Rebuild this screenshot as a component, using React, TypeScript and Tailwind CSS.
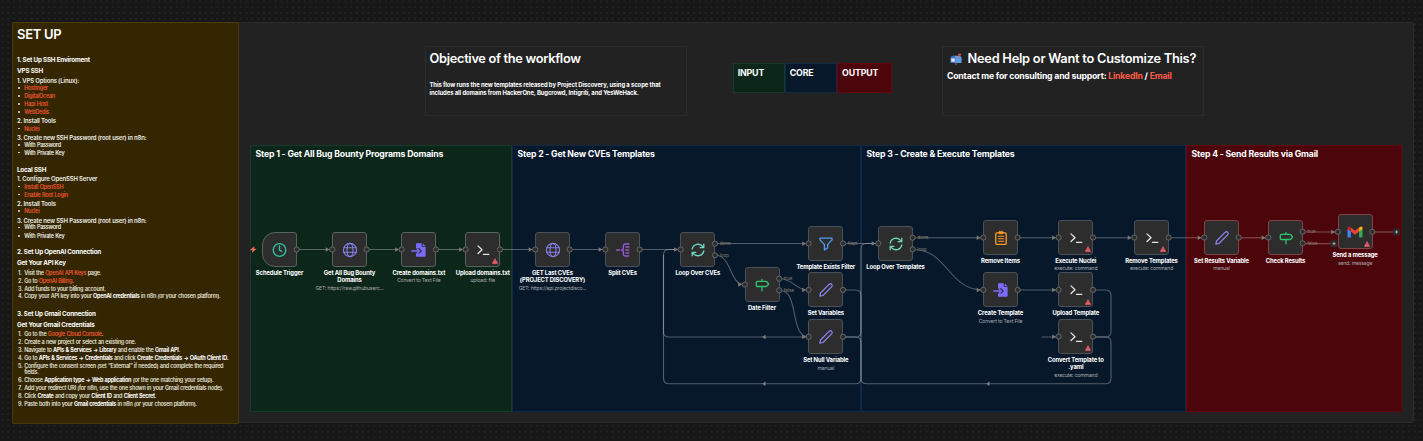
import React from "react";
import clsx from "clsx";

type IconName =
  | "clock"
  | "globe"
  | "file"
  | "terminal"
  | "split"
  | "loop"
  | "sign"
  | "filter"
  | "pencil"
  | "clipboard"
  | "gmail";

type FlowNode = {
  x: number;
  y: number;
  icon: IconName;
  title: string[];
  subtitle?: string;
  outputs?: string[];
  trigger?: boolean;
  warning?: boolean;
  border?: string;
};

type SetupRow = {
  h: number;
  kind: "heading" | "step" | "bullet" | "item";
  num?: string;
  text: React.ReactNode;
};

const NODE = 35;

const GREEN = "border-[#56645b]";
const BLUE = "border-[#4a5058]";
const RED = "border-[#7d4548]";

const nodes: FlowNode[] = [
  { x: 262, y: 232, icon: "clock", title: ["Schedule Trigger"], trigger: true, border: GREEN },
  { x: 332, y: 232, icon: "globe", title: ["Get All Bug Bounty", "Domains"], subtitle: "GET: https://raw.githubuserc...", border: GREEN },
  { x: 401.3, y: 232, icon: "file", title: ["Create domains.txt"], subtitle: "Convert to Text File", border: GREEN },
  { x: 465.3, y: 232, icon: "terminal", title: ["Upload domains.txt"], subtitle: "upload: file", warning: true, border: GREEN },
  { x: 535, y: 232, icon: "globe", title: ["GET Last CVEs", "(PROJECT DISCOVERY)"], subtitle: "GET: https://api.projectdisco..." },
  { x: 605, y: 232, icon: "split", title: ["Split CVEs"] },
  { x: 680.3, y: 232, icon: "loop", title: ["Loop Over CVEs"], outputs: ["done", "loop"] },
  { x: 744.5, y: 267, icon: "sign", title: ["Date Filter"], outputs: ["true", "false"] },
  { x: 808.3, y: 226, icon: "filter", title: ["Template Exists Filter"], outputs: ["Kept"] },
  { x: 808.3, y: 272.4, icon: "pencil", title: ["Set Variables"] },
  { x: 808.3, y: 319.3, icon: "pencil", title: ["Set Null Variable"], subtitle: "manual" },
  { x: 878, y: 226, icon: "loop", title: ["Loop Over Templates"], outputs: ["done", "loop"] },
  { x: 983, y: 220, icon: "clipboard", title: ["Remove Items"] },
  { x: 983, y: 272.4, icon: "file", title: ["Create Template"], subtitle: "Convert to Text File" },
  { x: 1058.3, y: 220, icon: "terminal", title: ["Execute Nuclei"], subtitle: "execute: command", warning: true },
  { x: 1058.3, y: 272.4, icon: "terminal", title: ["Upload Template"], warning: true },
  { x: 1058.3, y: 319, icon: "terminal", title: ["Convert Template to", ".yaml"], subtitle: "execute: command", warning: true },
  { x: 1134, y: 220, icon: "terminal", title: ["Remove Templates"], subtitle: "execute: command", warning: true },
  { x: 1204, y: 220, icon: "pencil", title: ["Set Results Variable"], subtitle: "manual", border: RED },
  { x: 1268, y: 220, icon: "sign", title: ["Check Results"], outputs: ["true", "false"], border: RED },
  { x: 1337.6, y: 214.3, icon: "gmail", title: ["Send a message"], subtitle: "send: message", warning: true, border: RED },
];

const edges = [
  "M297 249.5H332",
  "M367 249.5H401.5",
  "M436.5 249.5H465.5",
  "M500.5 249.5H535",
  "M570 249.5H605",
  "M640 249.5H680.5",
  "M715.5 243.5H808.5",
  "M715.5 255.3C732 255.3 729 284.5 744.5 284.5",
  "M779.5 278.7C794 278.7 794 290 808.5 290",
  "M779.5 290.3C800 290.3 789 336.8 808.5 336.8",
  "M843.5 243.5H878",
  "M843.5 290H855.5Q861 290 861 295.5V331.5Q861 337 855.5 337H669Q663.5 337 663.5 331.5V255Q663.5 249.5 669 249.5H680.5",
  "M843.5 337H855.5Q861 337 861 342.5V378.2Q861 383.7 855.5 383.7H669Q663.5 383.7 663.5 378.2V255",
  "M913 237.8H983",
  "M913 249.5C948 249.5 948 290 983 290",
  "M1018 237.8H1058.5",
  "M1018 290H1058.5",
  "M1093.5 237.8H1134",
  "M1169 237.8H1204",
  "M1093.5 290H1105.5Q1111 290 1111 295.5V331.5Q1111 337 1105.5 337H1041.5",
  "M1093.5 337H1105.5Q1111 337 1111 342.5V378.2Q1111 383.7 1105.5 383.7H866.5Q861 383.7 861 378.2V249Q861 243.5 866.5 243.5H878",
  "M1239 237.8H1268",
  "M1303 232H1337.5",
  "M1303 243.7H1331",
  "M1372.5 232H1393",
];

// [tip x, y] of arrows that enter a node
const arrows = [
  [329.5, 249.5], [399, 249.5], [463, 249.5], [532.5, 249.5], [602.5, 249.5], [678, 249.5],
  [742, 284.5], [806, 243.7], [806, 290], [806, 336.8], [875.5, 243.5],
  [980.5, 237.8], [980.5, 290], [1056, 237.8], [1056, 290], [1056, 336.8],
  [1131.5, 237.8], [1201.5, 237.8], [1265.5, 237.8], [1335, 232],
];

const backArrows = [[762, 337], [762, 383.7], [986, 383.7]];

const A = ({ children }: { children: React.ReactNode }) => (
  <span className="text-[#ee5534]">{children}</span>
);

const B = ({ children }: { children: React.ReactNode }) => (
  <span className="font-bold text-white">{children}</span>
);

const setupRows: SetupRow[] = [
  { h: 12, kind: "heading", text: "1. Set Up SSH Enviroment" },
  { h: 11, kind: "heading", text: "VPS SSH" },
  { h: 10, kind: "step", text: "1. VPS Options (Linux):" },
  { h: 7.3, kind: "bullet", text: <A>Hostinger</A> },
  { h: 8, kind: "bullet", text: <A>DigitalOcean</A> },
  { h: 7.5, kind: "bullet", text: <A>Hapi Host</A> },
  { h: 8.5, kind: "bullet", text: <A>WebDedis</A> },
  { h: 9, kind: "step", text: "2. Install Tools" },
  { h: 7.3, kind: "bullet", text: <A>Nuclei</A> },
  { h: 9, kind: "step", text: "3. Create new SSH Password (root user) in n8n:" },
  { h: 7.7, kind: "bullet", text: "With Password" },
  { h: 7.3, kind: "bullet", text: "With Private Key" },
  { h: 17.7, kind: "heading", text: "Local SSH" },
  { h: 9, kind: "step", text: "1. Configure OpenSSH Server" },
  { h: 7.3, kind: "bullet", text: <A>Install OpenSSH</A> },
  { h: 8, kind: "bullet", text: <A>Enable Root Login</A> },
  { h: 9.5, kind: "step", text: "2. Install Tools" },
  { h: 7.2, kind: "bullet", text: <A>Nuclei</A> },
  { h: 9.5, kind: "step", text: "3. Create new SSH Password (root user) in n8n:" },
  { h: 6.7, kind: "bullet", text: "With Password" },
  { h: 8.7, kind: "bullet", text: "With Private Key" },
  { h: 16, kind: "heading", text: "2. Set Up OpenAI Connection" },
  { h: 11, kind: "heading", text: "Get Your API Key" },
  { h: 10, kind: "item", num: "1.", text: <>Visit the <A>OpenAI API Keys</A> page.</> },
  { h: 8, kind: "item", num: "2.", text: <>Go to <A>OpenAI Billing</A>.</> },
  { h: 8, kind: "item", num: "3.", text: "Add funds to your billing account." },
  { h: 7.3, kind: "item", num: "4.", text: <>Copy your API key into your <B>OpenAI credentials</B> in n8n (or your chosen platform).</> },
  { h: 17.7, kind: "heading", text: "3. Set Up Gmail Connection" },
  { h: 11, kind: "heading", text: "Get Your Gmail Credentials" },
  { h: 9, kind: "item", num: "1.", text: <>Go to the <A>Google Cloud Console</A>.</> },
  { h: 8, kind: "item", num: "2.", text: "Create a new project or select an existing one." },
  { h: 8, kind: "item", num: "3.", text: <>Navigate to <B>APIs &amp; Services → Library</B> and enable the <B>Gmail API</B>.</> },
  { h: 8, kind: "item", num: "4.", text: <>Go to <B>APIs &amp; Services → Credentials</B> and click <B>Create Credentials → OAuth Client ID.</B></> },
  { h: 8, kind: "item", num: "5.", text: "Configure the consent screen (set “External” if needed) and complete the required" },
  { h: 6.3, kind: "item", text: "fields." },
  { h: 7.7, kind: "item", num: "6.", text: <>Choose <B>Application type → Web application</B> (or the one matching your setup).</> },
  { h: 8, kind: "item", num: "7.", text: "Add your redirect URI (for n8n, use the one shown in your Gmail credentials node)." },
  { h: 8, kind: "item", num: "8.", text: <>Click <B>Create</B> and copy your <B>Client ID</B> and <B>Client Secret</B>.</> },
  { h: 8, kind: "item", num: "9.", text: <>Paste both into your <B>Gmail credentials</B> in n8n (or your chosen platform).</> },
];

const rowText = {
  heading: "text-[6.3px] font-bold text-white tracking-[-0.19px]",
  step: "text-[6px] font-semibold text-[#f0ede6] tracking-[-0.17px]",
  bullet: "text-[5.5px] font-semibold text-[#f0ede6] tracking-[-0.28px] [word-spacing:0.4px]",
  item: "text-[5.5px] font-semibold text-[#e4e0d6] tracking-[-0.3px] [word-spacing:0.4px]",
};

const SetupLine = ({ row }: { row: SetupRow }) => (
  <li
    className={clsx("flex items-end whitespace-nowrap leading-[8px]", rowText[row.kind])}
    style={{ height: row.h }}
  >
    {row.kind === "bullet" && (
      <span className="flex w-[7.2px] h-[8px] shrink-0 items-center pl-[1px]">
        <i className="size-[1.8px] rounded-full bg-[#e9e6df]" />
      </span>
    )}
    {row.kind === "item" && <span className="w-[7.2px] shrink-0 pl-[1.1px]">{row.num}</span>}
    <span>{row.text}</span>
  </li>
);

const NodeIcon = ({ name }: { name: IconName }) => {
  const line = {
    fill: "none",
    strokeLinecap: "round" as const,
    strokeLinejoin: "round" as const,
    className: "size-[16px] overflow-visible",
    viewBox: "0 0 16 16",
  };

  switch (name) {
    case "clock":
      return (
        <svg {...line} stroke="#31c49f" strokeWidth="1.3">
          <circle cx="7.5" cy="8" r="6.3" />
          <path d="M7.5 4v4.2l2.3 1.2" />
        </svg>
      );
    case "globe":
      return (
        <svg {...line} stroke="#8681e8" strokeWidth="1.1">
          <circle cx="8" cy="8" r="6.6" />
          <ellipse cx="8" cy="8" rx="3" ry="6.6" />
          <path d="M1.8 5.7h12.4M1.8 10.3h12.4" />
        </svg>
      );
    case "file":
      return (
        <svg {...line}>
          <path
            d="M5 1.9Q5 1.3 5.6 1.3H10.7V4.7H14.6V14Q14.6 14.7 13.9 14.7H5.7Q5 14.7 5 14V11.6H8.3L11 8.9L8.3 6.2H5Z"
            fill="#7b6cff"
          />
          <path d="M11.7 1.4L14.5 3.9H11.7Z" fill="#7b6cff" />
          <path d="M.8 9H8.2M6.1 6.8L8.4 9L6.1 11.2" stroke="#7b6cff" strokeWidth="1.3" />
        </svg>
      );
    case "terminal":
      return (
        <svg {...line} stroke="#e4e4e4" strokeWidth="1.3">
          <path d="M3 3.9l4 3.8-4 3.8M8.4 12.3h5.4" />
        </svg>
      );
    case "split":
      return (
        <svg {...line} stroke="#9458d0" strokeWidth="1.3">
          <path d="M1.5 8H4.5M13.8 2H10.6Q8.4 2 8.4 4V6Q8.4 8 6.4 8Q8.4 8 8.4 10V12Q8.4 14 10.6 14H13.8M10.8 5H13.8M10.8 8H13.8M10.8 11H13.8" />
        </svg>
      );
    case "loop":
      return (
        <svg {...line} stroke="#6fd6c0" strokeWidth="1.3">
          <path d="M2.2 7A6 6 0 0 1 12.8 4.6M13.8 9A6 6 0 0 1 3.2 11.4M13.8 2.2V5.7H10.2M2.2 13.8V10.3H5.8" />
        </svg>
      );
    case "sign":
      return (
        <svg {...line} stroke="#31c46f" strokeWidth="1.3">
          <path d="M8 2.4V4.3M8 9.6V13.8M3.4 4.4H12Q12.5 4.4 12.9 4.8L14.6 7L12.9 9.1Q12.5 9.5 12 9.5H3.4Q2.3 9.5 2.3 8.5V5.4Q2.3 4.4 3.4 4.4Z" />
        </svg>
      );
    case "filter":
      return (
        <svg {...line} stroke="#4d9df0" strokeWidth="1.3">
          <path d="M2 2.2H14V3.9L9.6 8.6V11.9L6.4 14V8.6L2 3.9Z" />
        </svg>
      );
    case "pencil":
      return (
        <svg {...line} stroke="#8d86f2" strokeWidth="1.2">
          <path d="M1.8 14.2L2.5 11L11.3 2.2Q12.5 1.2 13.7 2.3Q14.8 3.5 13.8 4.7L5 13.5Z" />
        </svg>
      );
    case "clipboard":
      return (
        <svg {...line} stroke="#ff9b26" strokeWidth="1.3">
          <rect x="2.8" y="2.8" width="10.4" height="11.6" rx="1.2" />
          <rect x="5.9" y="1.4" width="4.2" height="2.4" rx=".5" fill="#ff9b26" strokeWidth=".6" />
          <path d="M5.4 6.2h5.2M5.4 8.7h5.2M5.4 11.2h5.2" strokeWidth="1.1" />
        </svg>
      );
    case "gmail":
      return (
        <svg {...line}>
          <path d="M.5 4.7V12.4Q.5 13.4 1.5 13.4H3.9V7.2Z" fill="#4285f4" />
          <path d="M12.1 7.2V13.4H14.5Q15.5 13.4 15.5 12.4V4.7Z" fill="#34a853" />
          <path d="M12.1 3.6V7.6L15.5 5.1V4Q15.5 2.7 14.3 2.6Q13.7 2.5 13.1 2.9Z" fill="#fbbc04" />
          <path d="M3.9 7.6V3.6L8 6.7L12.1 3.6V7.6L8 10.7Z" fill="#ea4335" />
          <path d="M.5 4V5.1L3.9 7.6V3.6L2.9 2.9Q2.3 2.5 1.7 2.6Q.5 2.7 .5 4Z" fill="#c5221f" />
        </svg>
      );
  }
};

const Warning = () => (
  <svg className="absolute right-[1.8px] bottom-[1.8px] size-[6px]" viewBox="0 0 12 12">
    <path d="M6 1L11.4 11H.6Z" fill="#f2606f" stroke="#f2606f" strokeLinejoin="round" />
    <path d="M6 4.5v3M6 9v.6" stroke="#7a2630" strokeWidth="1.2" />
  </svg>
);

const NodeCard = ({ node }: { node: FlowNode }) => (
  <div className="absolute flex w-[35px] flex-col items-center" style={{ left: node.x, top: node.y }}>
    <div
      className={clsx(
        "relative flex size-[35px] shrink-0 items-center justify-center border bg-[#2d2d2d]",
        node.trigger ? "rounded-l-[13px] rounded-r-[3px]" : "rounded-[3px]",
        node.border ?? BLUE
      )}
    >
      <NodeIcon name={node.icon} />
      {node.warning && <Warning />}
    </div>
    <div className="mt-[1.7px] flex flex-col items-center whitespace-nowrap text-[5.9px] font-bold leading-[7.6px] tracking-[-0.13px] text-white">
      {node.title.map((line) => (
        <span key={line}>{line}</span>
      ))}
      {node.subtitle && (
        <span className="text-[5.1px] font-normal leading-[8px] tracking-[-0.16px] text-[#a9adae]">{node.subtitle}</span>
      )}
    </div>
  </div>
);

const outputOffsets = (node: FlowNode) =>
  node.outputs?.length === 2 ? [-5.8, 5.8] : [0];

const Plus = ({ x, y }: { x: number; y: number }) => (
  <g>
    <rect x={x - 3.5} y={y - 3.5} width="7" height="7" rx="1.2" fill="#2e2828" />
    <path d={`M${x - 1.6} ${y}h3.2M${x} ${y - 1.6}v3.2`} stroke="#b5aeae" strokeWidth=".9" />
  </g>
);

const Edges = () => (
  <svg className="absolute inset-0" width="1423" height="441" viewBox="0 0 1423 441">
    <g fill="none" stroke="#ffffff" strokeOpacity=".3" strokeWidth="1.1">
      {edges.map((d) => (
        <path key={d} d={d} />
      ))}
    </g>
    <g fill="#7b7b7b">
      {arrows.map(([x, y]) => (
        <path key={`${x}-${y}`} d={`M${x} ${y}l-3.8 -2.2v4.4z`} />
      ))}
      {backArrows.map(([x, y]) => (
        <path key={`${x}-${y}`} d={`M${x} ${y}l3.6 -2.3v4.6z`} />
      ))}
    </g>
    <Plus x={1334} y={243.7} />
    <Plus x={1396.5} y={232} />
    <path d="M254.3 246.6L250.4 250.1H253L252.1 252.6L256.2 248.9H253.7Z" fill="#ff6d5a" stroke="#ff6d5a" strokeWidth=".4" />
  </svg>
);

const Handles = () => (
  <svg className="absolute inset-0" width="1423" height="441" viewBox="0 0 1423 441">
    {nodes.map((node) => {
      const cy = node.y + NODE / 2;
      return (
        <g key={`${node.x}-${node.y}`} fill="#2d2d2d" stroke="#6c6c6c" strokeWidth=".9">
          {!node.trigger && <circle cx={node.x + 0.3} cy={cy} r="2.6" />}
          {outputOffsets(node).map((dy) => (
            <circle key={dy} cx={node.x + NODE - 0.3} cy={cy + dy} r="2.6" />
          ))}
        </g>
      );
    })}
  </svg>
);

const OutputLabels = () => (
  <>
    {nodes.flatMap((node) =>
      (node.outputs ?? []).map((label, i) => (
        <span
          key={`${node.x}-${node.y}-${label}`}
          className="absolute text-[4.9px] leading-[6px] tracking-[-0.2px] text-[#85786d]"
          style={{ left: node.x + NODE + 4.2, top: node.y + NODE / 2 + outputOffsets(node)[i] - 3.4 }}
        >
          {label}
        </span>
      ))
    )}
  </>
);

const stepTitle = "pl-[4.5px] pt-[3px] text-[8.7px] leading-[11px] font-bold tracking-[-0.17px] whitespace-nowrap";

export default function App() {
  return (
    <main className="relative h-[441px] w-[1423px] overflow-hidden bg-[#171717] bg-[radial-gradient(circle,#272727_0.6px,transparent_0.9px)] bg-[length:5.82px_5.82px] bg-[position:-0.5px_-1.5px] font-['Inter','Noto_Sans',sans-serif] text-white">
      {/* Sticky notes */}
      <section className="absolute left-[12px] top-[22px] h-[401px] w-[1402px] rounded-[2px] border border-[#2b2b2b] bg-[#222222]" />

      <section className="absolute left-[12px] top-[22px] h-[402px] w-[227px] rounded-[1px] border border-[#4b3906] bg-[#332600] pl-[4px]">
        <h1 className="h-[29px] pt-[3px] text-[13px] font-semibold leading-[16px] tracking-[-0.3px]">SET UP</h1>
        <ul>
          {setupRows.map((row, i) => (
            <SetupLine key={i} row={row} />
          ))}
        </ul>
      </section>

      <section className="absolute left-[425px] top-[46px] h-[70px] w-[262px] border border-[#2c2c2c] pl-[3.5px]">
        <h1 className="pt-[3px] text-[12.8px] font-semibold leading-[17px] tracking-[-0.31px]">Objective of the workflow</h1>
        <p className="pt-[14px] text-[5.9px] font-bold leading-[8px] tracking-[-0.08px] whitespace-nowrap">
          This flow runs the new templates released by Project Discovery, using a scope that
          <br />
          includes all domains from HackerOne, Bugcrowd, Intigriti, and YesWeHack.
        </p>
      </section>

      <div className="absolute left-[733px] top-[63px] flex h-[30px] w-[159px] text-[8.8px] font-bold leading-[11px] tracking-[-0.15px]">
        <div className="w-[52px] border border-[#163a28] bg-[#0c2619] pl-[3.7px] pt-[3px]">INPUT</div>
        <div className="w-[52px] border border-[#0f2a47] bg-[#07182b] pl-[3.7px] pt-[3px]">CORE</div>
        <div className="w-[55px] border border-[#65060f] bg-[#4d050c] pl-[4px] pt-[3px]">OUTPUT</div>
      </div>

      <section className="absolute left-[942px] top-[46px] h-[70px] w-[262px] border border-[#2c2c2c] pl-[4px]">
        <h1 className="flex items-center pt-[3px] text-[12.8px] font-semibold leading-[17px] tracking-[-0.24px] whitespace-nowrap">
          <svg className="ml-[3px] mr-[5.5px] size-[12px] shrink-0" viewBox="0 0 12 12">
            <path d="M4.8 9h2v3h-2z" fill="#6b4a44" />
            <path d="M3 2.8H8.8Q11.6 2.8 11.6 5.6V10H3Z" fill="#5c9fe6" />
            <path d="M.4 5.6Q.4 2.8 3 2.8Q5.4 2.8 5.4 5.6V10H.4Z" fill="#3c6fb5" />
            <path d="M1.2 5.4H4.8V8.8H1.2Z" fill="#e9dff2" />
            <path d="M8.3 5.6V.8H11V2.5H9.2V5.6Z" fill="#e2574c" />
          </svg>
          Need Help or Want to Customize This?
        </h1>
        <h2 className="text-[8.7px] font-bold leading-[18px] tracking-[-0.19px] whitespace-nowrap">
          Contact me for consulting and support: <span className="text-[#ff5a46]">LinkedIn</span> /{" "}
          <span className="text-[#ff5a46]">Email</span>
        </h2>
      </section>

      <div className="absolute left-[250px] top-[145px] flex h-[267px]">
        <section className={clsx("w-[262px] border border-[#15392a] bg-[#0c2619]", stepTitle)}>
          Step 1 - Get All Bug Bounty Programs Domains
        </section>
        <section className={clsx("w-[349px] border border-[#0f2a47] bg-[#07182b]", stepTitle)}>
          Step 2 - Get New CVEs Templates
        </section>
        <section className={clsx("w-[325px] border border-[#0f2a47] bg-[#07182b]", stepTitle)}>
          Step 3 - Create &amp; Execute Templates
        </section>
        <section className={clsx("w-[216px] border border-[#65060f] bg-[#4d050c]", stepTitle)}>
          Step 4 - Send Results via Gmail
        </section>
      </div>

      {/* Workflow graph */}
      <Edges />
      {nodes.map((node) => (
        <NodeCard key={`${node.x}-${node.y}`} node={node} />
      ))}
      <Handles />
      <OutputLabels />
    </main>
  );
}
